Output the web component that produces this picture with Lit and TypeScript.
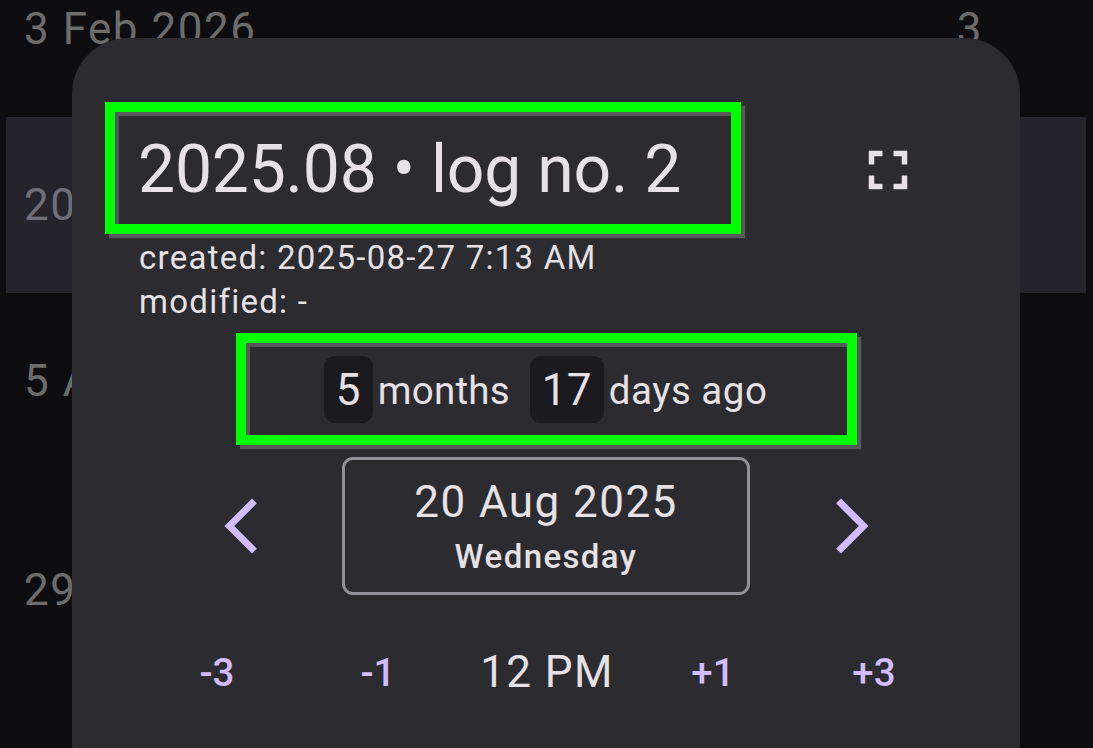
import { LitElement, html, css } from "lit";
import { customElement } from "lit/decorators.js";

@customElement("app-root")
export class AppRoot extends LitElement {
  static styles = css`
    :host { display: block; position: relative; width: 1093px; height: 748px; overflow: hidden; background: #0e0e10; font-family: Roboto, "Noto Sans", sans-serif; color: #e6e1e5; }
    .list { display: flex; flex-direction: column; margin-top: -59px; padding: 0 7px 0 6px; }
    .row { height: 176px; flex: none; display: flex; justify-content: space-between; align-items: center; padding: 0 103px 0 18px; font-size: 44px; letter-spacing: 1.5px; color: #6c6c6c; }
    .row.sel { background: #25232c; color: #6f6d78; }
    .row.tall { height: 242px; }
    .dialog { position: absolute; left: 72px; top: 38px; width: 948px; height: 760px; background: #2b2b30; border-radius: 56px; padding: 64px 0 0 33px; box-sizing: border-box; }
    .head { display: flex; align-items: center; }
    .mark { border: 10px solid #00ff00; box-sizing: border-box; box-shadow: 4px 4px 1px rgba(128,128,128,.55), inset 4px 4px 1px rgba(128,128,128,.55); }
    .title { width: 636px; height: 132px; display: flex; align-items: center; padding: 3px 0 0 23px; font-size: 66px; letter-spacing: -0.2px; white-space: nowrap; }
    .full { width: 66px; height: 66px; margin: 4px 0 0 114px; fill: #e6e1e5; flex: none; display: block; }
    .meta { margin: 2px 0 0 34px; font-size: 33px; line-height: 44px; letter-spacing: 1.26px; }
    .ago { width: 621px; height: 112px; margin: 9px 0 0 131px; padding: 1px 2px 0 0; display: flex; align-items: center; justify-content: center; font-size: 38.5px; letter-spacing: 0.25px; white-space: nowrap; }
    .word { margin-top: 2px; }
    .word.long { letter-spacing: 0.5px; }
    .chip { width: 49px; height: 67px; background: #1b1b1f; border-radius: 11px; display: flex; align-items: center; justify-content: center; font-size: 44px; font-weight: 400; margin-right: 5px; }
    .chip.wide { width: 74px; margin-left: 20px; }
    .date-row { display: flex; justify-content: center; align-items: center; gap: 68.5px; margin: 12px 33px 0 0; }
    .chev { width: 66px; height: 66px; fill: #d0bcff; flex: none; display: block; }
    .date { width: 408px; height: 138px; box-sizing: border-box; border: 3px solid #938f99; border-radius: 11px; display: flex; flex-direction: column; align-items: center; justify-content: center; }
    .d1 { font-size: 44px; line-height: 58px; letter-spacing: 1.45px; }
    .d2 { font-size: 33px; line-height: 44px; margin-top: 4px; font-weight: 500; letter-spacing: 1.4px; }
    .time { display: grid; grid-template-columns: 160px 162px 176px 156px 166px; margin: 46px 0 0 32px; align-items: center; text-align: center; height: 62px; }
    .btn { font-size: 38.5px; font-weight: 500; color: #d0bcff; }
    .hour { font-size: 44px; letter-spacing: 1.4px; white-space: nowrap; }
  `;

  render() {
    return html`
      <div class="list">
        <div class="row"><span>3 Feb 2026</span><span>3</span></div>
        <div class="row sel"><span>20 Aug 2025</span><span>2</span></div>
        <div class="row"><span>5 Aug 2025</span><span>1</span></div>
        <div class="row tall"><span>29 Jul 2025</span><span>1</span></div>
      </div>
      <div class="dialog">
        <div class="head">
          <div class="mark title">2025.08 • log no. 2</div>
          <svg class="full" viewBox="0 0 24 24"><path d="M7 14H5v5h5v-2H7v-3zm-2-4h2V7h3V5H5v5zm12 7h-3v2h5v-5h-2v3zM14 5v2h3v3h2V5h-5z"/></svg>
        </div>
        <div class="meta">created: 2025-08-27 7:13 AM<br />modified: -</div>
        <div class="mark ago">
          <span class="chip">5</span><span class="word">months</span>
          <span class="chip wide">17</span><span class="word long">days ago</span>
        </div>
        <div class="date-row">
          <svg class="chev" viewBox="0 0 24 24"><path d="M17.77 3.77 16 2 6 12l10 10 1.77-1.77L9.54 12z"/></svg>
          <div class="date"><div class="d1">20 Aug 2025</div><div class="d2">Wednesday</div></div>
          <svg class="chev" viewBox="0 0 24 24"><path d="M6.23 20.23 8 22l10-10L8 2 6.23 3.77 14.46 12z"/></svg>
        </div>
        <div class="time">
          <span class="btn">-3</span><span class="btn">-1</span><span class="hour">12 PM</span><span class="btn">+1</span><span class="btn">+3</span>
        </div>
      </div>
    `;
  }
}
